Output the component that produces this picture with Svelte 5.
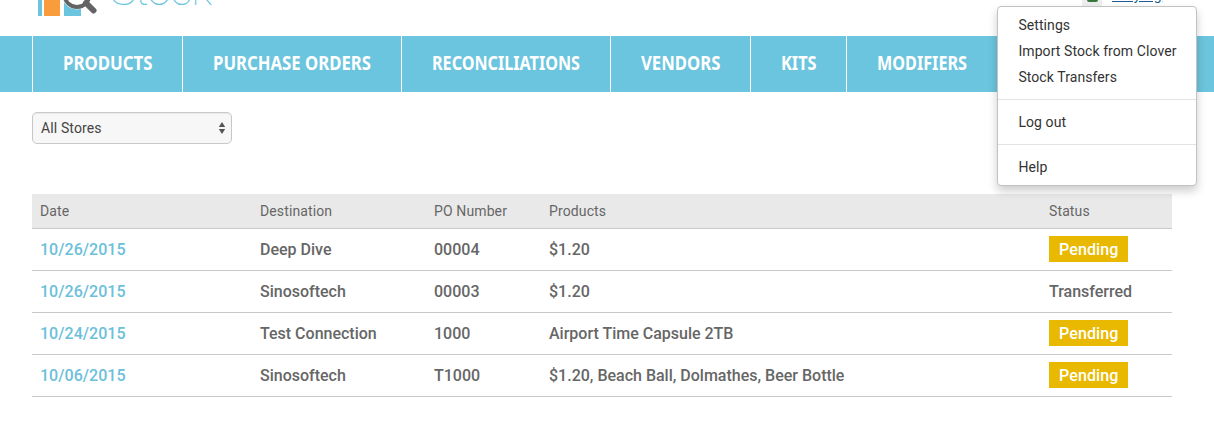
<script>
  const tabs = [
    { label: 'PRODUCTS', width: 150, text: 89.5 },
    { label: 'PURCHASE ORDERS', width: 219, text: 158 },
    { label: 'RECONCILIATIONS', width: 209, text: 148 },
    { label: 'VENDORS', width: 140, text: 79.5 },
    { label: 'KITS', width: 96, text: 35.5 },
    { label: 'MODIFIERS', width: 151, text: 90 },
  ];

  const menu = [
    ['Settings', 'Import Stock from Clover', 'Stock Transfers'],
    ['Log out'],
    ['Help'],
  ];

  const transfers = [
    { date: '10/26/2015', destination: 'Deep Dive', po: '00004', products: '$1.20', status: 'Pending' },
    { date: '10/26/2015', destination: 'Sinosoftech', po: '00003', products: '$1.20', status: 'Transferred' },
    { date: '10/24/2015', destination: 'Test Connection', po: '1000', products: 'Airport Time Capsule 2TB', status: 'Pending' },
    { date: '10/06/2015', destination: 'Sinosoftech', po: 'T1000', products: '$1.20, Beach Ball, Dolmathes, Beer Bottle', status: 'Pending' },
  ];
</script>

<div class="page">
  <header>
    <svg class="logo" width="200" height="36" viewBox="0 0 200 36">
      <path fill="#6cc5de" d="M6 0h4v16H6zM32 0h17v16H32z" />
      <path fill="#f89c3c" d="M12 0h16v16H12z" />
      <circle cx="45" cy="-5.5" r="15" fill="#fff" />
      <circle cx="45" cy="-5.5" r="12.5" fill="#fff" stroke="#646464" stroke-width="4" />
      <path d="M54 3l7.5 7.5" stroke="#646464" stroke-width="6" stroke-linecap="round" />
      <text class="brand" x="78" y="4.5" textLength="102" lengthAdjust="spacing">Stock</text>
    </svg>
    <div class="account">
      <span class="flag"><i></i></span>
      <a href="#account">Ruiying</a>
    </div>
  </header>

  <nav>
    {#each tabs as tab}
      <a href="#tab" style="width: {tab.width}px">
        <svg width={tab.text} height="30">
          <text x="0" y="21" textLength={tab.text} lengthAdjust="spacingAndGlyphs">{tab.label}</text>
        </svg>
      </a>
    {/each}
  </nav>

  <main>
    <button class="store">
      All Stores
      <svg width="8" height="12" viewBox="0 0 8 12">
        <path fill="#555" d="M4 0l3.2 5H.8zM4 12L.8 7h6.4z" />
      </svg>
    </button>

    <table>
      <thead>
        <tr>
          <th class="date">Date</th>
          <th class="destination">Destination</th>
          <th class="po">PO Number</th>
          <th class="products">Products</th>
          <th>Status</th>
        </tr>
      </thead>
      <tbody>
        {#each transfers as row}
          <tr>
            <td><a href="#transfer">{row.date}</a></td>
            <td>{row.destination}</td>
            <td>{row.po}</td>
            <td>{row.products}</td>
            <td>
              <span class:pending={row.status === 'Pending'}>{row.status}</span>
            </td>
          </tr>
        {/each}
      </tbody>
    </table>
  </main>

  <div class="menu">
    {#each menu as group}
      <ul>
        {#each group as item}
          <li>{item}</li>
        {/each}
      </ul>
    {/each}
  </div>
</div>

<style>
  :global(body) {
    background: #fff;
  }

  .page {
    position: relative;
    height: 425px;
    overflow: hidden;
    font-family: Roboto, sans-serif;
    color: #666;
  }

  header {
    display: flex;
    justify-content: space-between;
    height: 36px;
    padding: 0 52px 0 32px;
  }

  .brand {
    font-family: Roboto, sans-serif;
    font-size: 44px;
    font-weight: 100;
    fill: #6cc5de;
  }

  .account {
    display: flex;
    gap: 10px;
    height: 10px;
  }

  .account a {
    width: 50px;
    margin-top: -13px;
    font-size: 14px;
    letter-spacing: 0.7px;
    line-height: 16px;
    color: #1c5a94;
    white-space: nowrap;
  }

  .flag {
    width: 20px;
    height: 6px;
    background: #eee;
  }

  .flag i {
    display: block;
    width: 11px;
    height: 2px;
    margin: 0 auto;
    background: #35793a;
    border-radius: 0 0 2px 2px;
  }

  nav {
    display: flex;
    height: 56px;
    padding-left: 32px;
    background: #6cc5de;
  }

  nav a {
    display: flex;
    align-items: center;
    justify-content: center;
    flex: none;
    box-sizing: border-box;
    border-left: 1px solid #fff;
  }

  nav svg {
    overflow: visible;
  }

  nav text {
    font-family: "Noto Sans", sans-serif;
    font-size: 20px;
    font-weight: 700;
    fill: #fff;
  }

  main {
    padding: 20px 42px 0 32px;
  }

  .store {
    display: flex;
    align-items: center;
    justify-content: space-between;
    width: 200px;
    height: 32px;
    padding: 0 5px 0 8px;
    border: 1px solid #c8c8c8;
    border-radius: 5px;
    background: #f7f7f7;
    box-shadow: inset 0 1px 1px rgba(0, 0, 0, 0.06);
    font: 14px Roboto, sans-serif;
    letter-spacing: 0.12px;
    color: #444;
  }

  table {
    width: 1140px;
    margin-top: 50px;
    border-collapse: separate;
    border-spacing: 0;
    table-layout: fixed;
  }

  th,
  td {
    box-sizing: border-box;
    padding: 0 8px;
    border-bottom: 1px solid #c9c9c9;
    text-align: left;
    white-space: nowrap;
  }

  th {
    height: 35px;
    background: #e9e9e9;
    font-size: 14px;
    font-weight: 400;
    letter-spacing: 0.12px;
  }

  td {
    height: 42px;
    font-size: 16px;
    font-weight: 500;
    letter-spacing: 0;
  }

  td a {
    color: #6cc0da;
    letter-spacing: 0.03px;
    text-decoration: none;
  }

  .date {
    width: 220px;
  }

  .destination {
    width: 174px;
  }

  .po {
    width: 115px;
  }

  .products {
    width: 500px;
  }

  .pending {
    display: block;
    box-sizing: border-box;
    width: fit-content;
    height: 26px;
    margin-top: -1px;
    padding: 1px 10px 0;
    background: #e8b900;
    color: #fff;
    letter-spacing: 0.1px;
    line-height: 26px;
  }

  /* dropdown over the header and nav */
  .menu {
    position: absolute;
    top: 6px;
    left: 997px;
    box-sizing: border-box;
    width: 200px;
    height: 180px;
    padding-top: 5px;
    border: 1px solid #c2c2c2;
    border-radius: 4px;
    background: #fff;
    box-shadow: 0 5px 10px rgba(0, 0, 0, 0.2);
    font-size: 14px;
    color: #333;
  }

  ul {
    margin: 0;
    padding: 0 0 9px;
    list-style: none;
  }

  ul + ul {
    padding-top: 9px;
    border-top: 1px solid #e2e2e2;
  }

  li {
    padding-left: 20.4px;
    line-height: 26px;
    letter-spacing: 0.08px;
  }
</style>
